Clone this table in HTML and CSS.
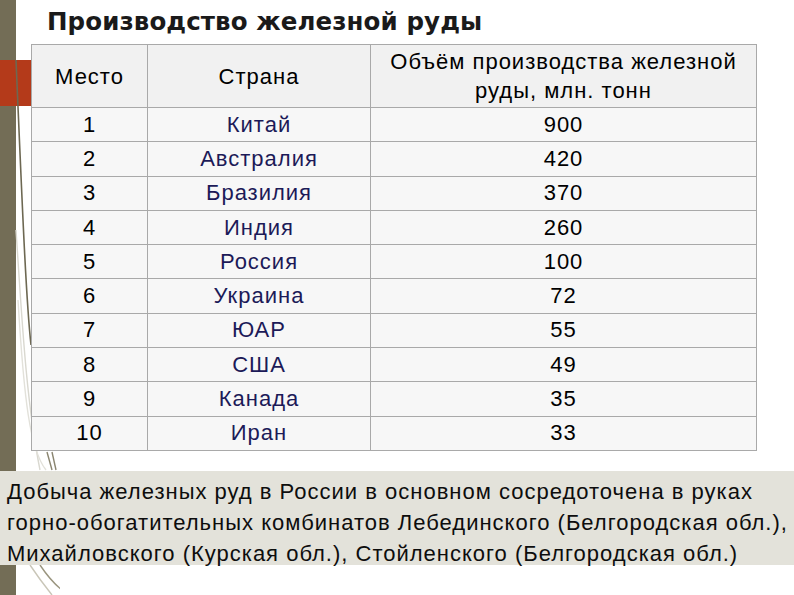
FILE: index.html
```html
<!DOCTYPE html>
<html lang="ru">
<head>
<meta charset="utf-8">
<title>Производство железной руды</title>
<link rel="stylesheet" href="styles.css">
</head>
<body>
<div class="slide">
  <div class="strip"></div>
  <div class="accent"></div>
  <svg class="deco" width="60" height="595" viewBox="0 0 60 595">
    <path d="M16 60 C 22 200, 26 300, 31 345" stroke="#6d6852" stroke-width="1.6" fill="none"/>
    <path d="M16 230 C 22 320, 26 400, 40 470" stroke="#d9d8d0" stroke-width="1.4" fill="none"/>
    <path d="M18 300 C 24 400, 30 450, 46 470" stroke="#e2e1da" stroke-width="1.4" fill="none"/>
    <path d="M47 452 L 52 470" stroke="#8a8570" stroke-width="1.4" fill="none"/>
    <path d="M52 452 L 56 470" stroke="#8a8570" stroke-width="1.4" fill="none"/>
    <path d="M75 452 L 72 470" stroke="#8a8570" stroke-width="1.4" fill="none"/>
    <path d="M40 565 C 50 580, 60 590, 70 595" stroke="#9a957f" stroke-width="1.4" fill="none"/>
    <path d="M30 565 C 40 580, 48 590, 52 595" stroke="#c9c6b8" stroke-width="1.4" fill="none"/>
  </svg>
  <h1 class="title">Производство железной руды</h1>
  <table class="ore">
    <thead>
      <tr>
        <th class="c1">Место</th>
        <th class="c2">Страна</th>
        <th class="c3">Объём производства железной<br>руды, млн. тонн</th>
      </tr>
    </thead>
    <tbody>
      <tr><td>1</td><td class="country">Китай</td><td>900</td></tr>
      <tr><td>2</td><td class="country">Австралия</td><td>420</td></tr>
      <tr><td>3</td><td class="country">Бразилия</td><td>370</td></tr>
      <tr><td>4</td><td class="country">Индия</td><td>260</td></tr>
      <tr><td>5</td><td class="country">Россия</td><td>100</td></tr>
      <tr><td>6</td><td class="country">Украина</td><td>72</td></tr>
      <tr><td>7</td><td class="country">ЮАР</td><td>55</td></tr>
      <tr><td>8</td><td class="country">США</td><td>49</td></tr>
      <tr><td>9</td><td class="country">Канада</td><td>35</td></tr>
      <tr><td>10</td><td class="country">Иран</td><td>33</td></tr>
    </tbody>
  </table>
  <div class="note">Добыча железных руд в России в основном сосредоточена в руках<br>горно-обогатительных комбинатов Лебединского (Белгородская обл.),<br>Михайловского (Курская обл.), Стойленского (Белгородская обл.)</div>
</div>
</body>
</html>
```

FILE: styles.css
```css
html, body {
  margin: 0;
  padding: 0;
  background: #ffffff;
}
.slide {
  position: relative;
  width: 794px;
  height: 595px;
  overflow: hidden;
  background: #ffffff;
  font-family: "Liberation Sans", Arial, sans-serif;
  color: #000;
  display: flex;
  flex-direction: column;
}
.strip {
  position: absolute;
  left: 0;
  top: 0;
  width: 16px;
  height: 595px;
  background: #736d56;
}
.accent {
  position: absolute;
  left: 0;
  top: 60px;
  width: 31px;
  height: 46px;
  background: #b43a1a;
}
.deco {
  position: absolute;
  left: 0;
  top: 0;
}
.title {
  margin: 4px 0 0 47px;
  height: 40px;
  font-family: "DejaVu Sans", "Lato", sans-serif;
  font-weight: bold;
  font-size: 24.5px;
  line-height: 36px;
  letter-spacing: 0.1px;
  color: #1a1a1a;
  white-space: nowrap;
}
.ore {
  position: relative;
  margin-left: 31px;
  width: 726px;
  border-collapse: collapse;
  font-size: 22px;
  letter-spacing: 1px;
}
.ore th, .ore td {
  border: 1px solid #a9a9a9;
  text-align: center;
  font-weight: normal;
  padding: 0;
}
.ore th {
  background: #f1f1f1;
  height: 62px;
  line-height: 29px;
}
.ore td {
  background: #f7f7f7;
  height: 33.3px;
  line-height: 24px;
}
.ore .c1 { width: 115px; }
.ore .c2 { width: 222px; }
.ore .c3 { padding: 0 4px; white-space: nowrap; }
.ore td.country { color: #1c1a58; }
.note {
  position: relative;
  margin-top: 20px;
  height: 94px;
  background: #e3e2da;
  font-size: 22px;
  letter-spacing: 1px;
  line-height: 31px;
  padding: 5px 0 0 7px;
  box-sizing: border-box;
  color: #0d0d0d;
  white-space: nowrap;
}
```
